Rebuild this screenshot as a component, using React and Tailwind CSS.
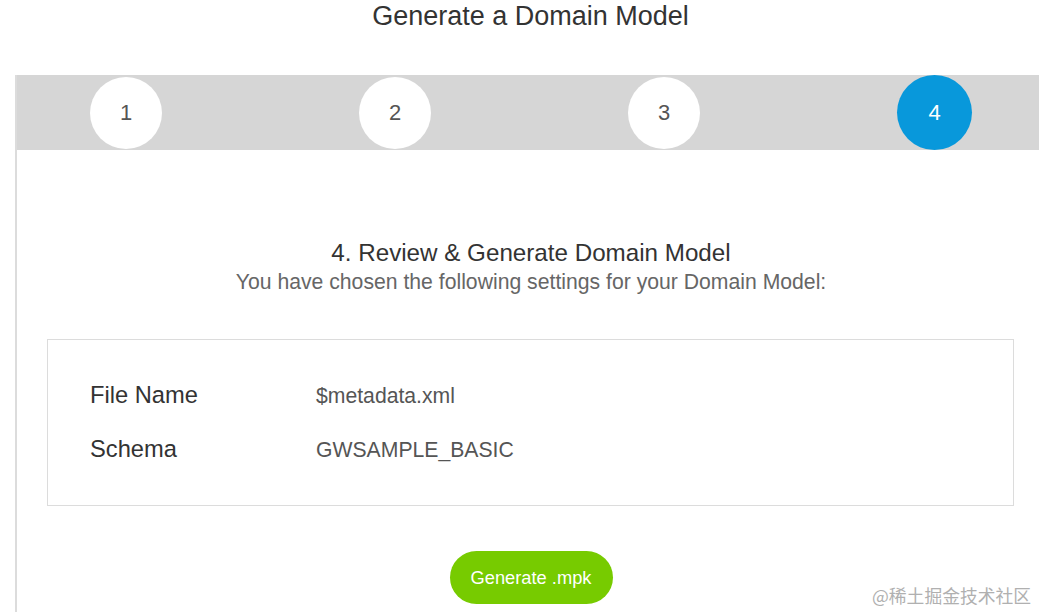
import React from "react";

const steps = [1, 2, 3, 4];
const settings = [
   { label: "File Name", value: "$metadata.xml" },
   { label: "Schema", value: "GWSAMPLE_BASIC" },
];

export default function App() {
   const current = 4;

   return (
      <div className="w-full h-[612px] overflow-hidden bg-white" style={{ fontFamily: '"Liberation Sans", Arial, sans-serif' }}>
         <div className="w-[1061px] relative">
            <h1 className="h-[75px] pt-[1px] text-center text-[27px] leading-[30px] text-[#333]">Generate a Domain Model</h1>

            <div className="ml-[15px] w-[1030px] border-l-2 border-[#dcdcdc] pb-[10px]">
               <div className="h-[75px] bg-[#d6d6d6] flex items-center justify-between pl-[73px] pr-[73px]">
                  {steps.map((n) =>
                     n === current ? (
                        <div key={n} className="w-[75px] h-[75px] rounded-full bg-[#0898db] flex items-center justify-center text-white text-[22px]">
                           {n}
                        </div>
                     ) : (
                        <div key={n} className="w-[72px] h-[72px] rounded-full bg-white flex items-center justify-center text-[#555] text-[22px]">
                           {n}
                        </div>
                     )
                  )}
               </div>

               <div className="pt-[89px] text-center">
                  <h2 className="text-[24.2px] leading-[28px] text-[#333]">4. Review &amp; Generate Domain Model</h2>
                  <p className="text-[21.2px] leading-[30px] text-[#666]">You have chosen the following settings for your Domain Model:</p>
               </div>

               <div className="mt-[42px] ml-[30px] w-[967px] h-[167px] border border-[#dcdcdc] pt-[29px] pl-[42px]">
                  {settings.map((s) => (
                     <div key={s.label} className="flex items-center h-[54px]">
                        <div className="w-[226px] text-[23.7px] text-[#333]">{s.label}</div>
                        <div className="text-[21.2px] text-[#555]">{s.value}</div>
                     </div>
                  ))}
               </div>

               <div className="mt-[45px] flex justify-center">
                  <button className="w-[163px] h-[53px] rounded-full bg-[#77cb00] text-white text-[18.3px]">Generate .mpk</button>
               </div>
            </div>

            <div
               className="absolute left-[872px] top-[582px] text-[17.8px] text-[#b0b0b0]"
               style={{ fontFamily: '"Noto Sans CJK SC", sans-serif' }}
            >
               @稀土掘金技术社区
            </div>
         </div>
      </div>
   );
}
